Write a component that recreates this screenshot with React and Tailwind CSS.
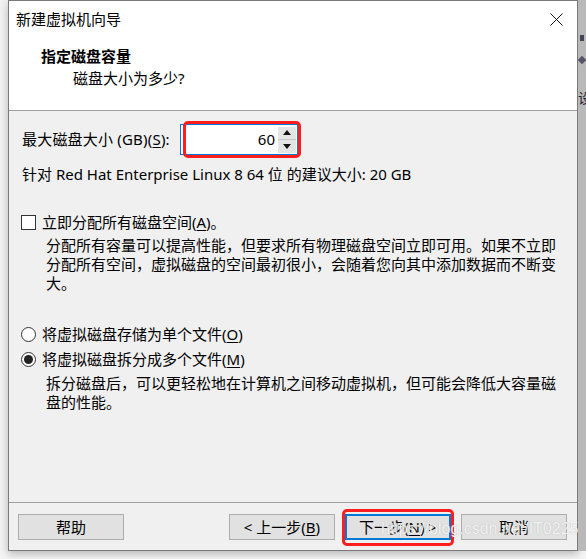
import React from "react";

function U({ children }) {
  return <span className="underline underline-offset-[2px] decoration-1">{children}</span>;
}

function Btn({ children, primary }) {
  return (
    <div
      className={
        "w-[106px] h-[26px] flex items-center justify-center bg-[#e1e1e1] text-[15px] leading-none " +
        (primary ? "border-2 border-[#0078d7]" : "border border-[#adadad]")
      }
    >
      {children}
    </div>
  );
}

export default function App() {
  return (
    <div className="relative w-[586px] h-[559px] overflow-hidden bg-[#f4f4f4] text-black font-['Noto_Sans','Noto_Sans_CJK_SC',sans-serif]">
      <div className="flex">
        <div className="w-[8px] h-[551px] bg-[#f2f2f2]" />
        <div className="w-[570px] h-[551px] border border-[#7a7a7a] bg-[#f0f0f0] flex flex-col shadow-[0_3px_8px_rgba(0,0,0,0.25)]">
          {/* header */}
          <div className="h-[110px] bg-white border-b border-[#a0a0a0] flex flex-col">
            <div className="h-[36px] flex items-center justify-between pl-[7px] pr-[14px] text-[15px]">
              <span>新建虚拟机向导</span>
              <svg width="13" height="13" viewBox="0 0 13 13" className="mt-[1px]">
                <path d="M0.5 0.5 L12.5 12.5 M12.5 0.5 L0.5 12.5" stroke="#111" strokeWidth="1" fill="none" />
              </svg>
            </div>
            <div className="mt-[9px] pl-[32px] leading-[20px] text-[15px] font-bold">指定磁盘容量</div>
            <div className="mt-[2px] pl-[64px] leading-[20px] text-[15px]">磁盘大小为多少?</div>
          </div>

          {/* body */}
          <div className="flex-1 pl-[12px] text-[15px] flex flex-col">
            <div className="mt-[13px] h-[31px] flex items-center">
              <div className="w-[159px] pl-[1px] tracking-[0.2px]">
                最大磁盘大小 (GB)(<U>S</U>):
              </div>
              <div className="w-[118px] h-[31px] border border-[#0078d7] bg-white flex items-center">
                <div className="flex-1 text-right pr-[3px] leading-none">60</div>
                <div className="w-[18px] h-[26px] mr-[1px] flex flex-col bg-[#e5e5e5]">
                  <div className="h-[13px] flex items-center justify-center border-b border-[#c8c8c8]">
                    <svg width="8" height="5" viewBox="0 0 8 5"><path d="M4 0 L8 5 L0 5 Z" fill="#111" /></svg>
                  </div>
                  <div className="h-[13px] flex items-center justify-center">
                    <svg width="8" height="5" viewBox="0 0 8 5"><path d="M0 0 L8 0 L4 5 Z" fill="#111" /></svg>
                  </div>
                </div>
              </div>
            </div>
            <div className="mt-[9px] pl-[1px] leading-[20px]">
              针对 Red Hat Enterprise Linux 8 64 位 的建议大小: 20 GB
            </div>

            <div className="mt-[28px] h-[20px] flex items-center">
              <div className="w-[15px] h-[15px] border border-[#333] bg-white" />
              <span className="ml-[6px]">
                立即分配所有磁盘空间(<U>A</U>)。
              </span>
            </div>
            <div className="mt-[4px] pl-[25px] leading-[19px] whitespace-nowrap">
              分配所有容量可以提高性能，但要求所有物理磁盘空间立即可用。如果不立即
              <br />
              分配所有空间，虚拟磁盘的空间最初很小，会随着您向其中添加数据而不断变
              <br />
              大。
            </div>

            <div className="mt-[31px] h-[20px] flex items-center">
              <div className="w-[15px] h-[15px] rounded-full border border-[#333] bg-white" />
              <span className="ml-[6px]">
                将虚拟磁盘存储为单个文件(<U>O</U>)
              </span>
            </div>
            <div className="mt-[5px] h-[20px] flex items-center">
              <div className="w-[15px] h-[15px] rounded-full border border-[#333] bg-white flex items-center justify-center">
                <div className="w-[9px] h-[9px] rounded-full bg-[#222]" />
              </div>
              <span className="ml-[6px]">
                将虚拟磁盘拆分成多个文件(<U>M</U>)
              </span>
            </div>
            <div className="mt-[5px] pl-[25px] leading-[19px] whitespace-nowrap">
              拆分磁盘后，可以更轻松地在计算机之间移动虚拟机，但可能会降低大容量磁
              <br />
              盘的性能。
            </div>
          </div>

          {/* footer */}
          <div className="h-[48px] border-t border-[#a0a0a0] pt-[11px] pl-[9px] pr-[10px] flex items-start">
            <Btn>帮助</Btn>
            <div className="flex-1" />
            <Btn>
              &lt; 上一步(<U>B</U>)
            </Btn>
            <div className="w-[10px]" />
            <Btn primary>
              下一步(<U>N</U>) &gt;
            </Btn>
            <div className="w-[10px]" />
            <Btn>取消</Btn>
          </div>
        </div>
        <div className="w-[8px] h-[551px] bg-[#b9b9b9] flex flex-col items-start text-[14px] leading-none text-[#223]">
          <div className="mt-[35px] ml-[2px] w-[4px] h-[6px] bg-[#445]" />
          <div className="mt-[16px] ml-[1px] w-[6px] h-[6px] rotate-45 bg-[#556]" />
          <div className="mt-[28px] ml-[0px] overflow-hidden">设</div>
        </div>
      </div>

      {/* annotations */}
      <div className="absolute left-[183px] top-[121px] w-[118px] h-[37px] rounded-[5px] border-[3px] border-[#ff1e1e]" />
      <div className="absolute left-[342px] top-[509px] w-[112px] h-[37px] rounded-[5px] border-[3px] border-[#ff1e1e]" />
      <div className="absolute left-[381px] top-[521px] text-[16px] leading-none whitespace-nowrap font-['Liberation_Sans',sans-serif] text-[rgba(255,255,255,0.85)] [text-shadow:0_0_1px_rgba(150,150,150,0.7)]">
        https://blog.csdn.net/IT0225
      </div>
    </div>
  );
}
